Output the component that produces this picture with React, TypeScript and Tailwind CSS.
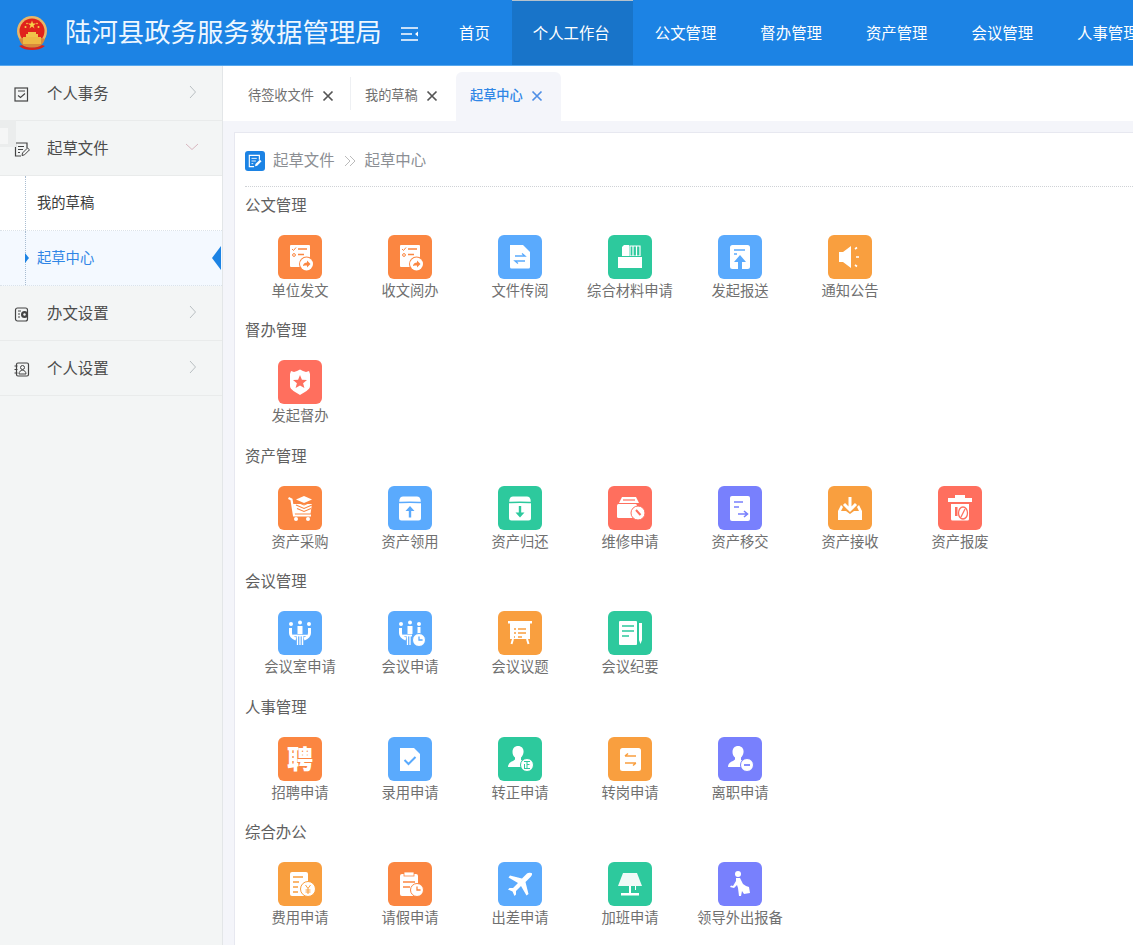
import type { ReactNode } from "react";

const ORANGE = "#fb8641";
const BLUE = "#5aaafd";
const GREEN = "#2dc99d";
const AMBER = "#f99f3f";
const RED = "#ff6f5e";
const PURPLE = "#7880fd";

const tileClass: Record<string, string> = {
  [ORANGE]: "bg-[#fb8641]",
  [BLUE]: "bg-[#5aaafd]",
  [GREEN]: "bg-[#2dc99d]",
  [AMBER]: "bg-[#f99f3f]",
  [RED]: "bg-[#ff6f5e]",
  [PURPLE]: "bg-[#7880fd]",
};

type Item = { label: string; color: string; glyph: (c: string) => ReactNode };

// small clock badge used by a few of the tiles
const clock = (x: number, y: number, r: number, c: string) => (
  <>
    <circle cx={x} cy={y} r={r} fill="#fff" stroke={c} strokeWidth="1" />
    <path d={`M${x} ${y - r * 0.55}V${y}H${x + r * 0.55}`} fill="none" stroke={c} strokeWidth="1.3" />
  </>
);

const checklist = (c: string) => (
  <>
    <rect x="12" y="10" width="20" height="22" rx="1" fill="#fff" />
    <path d="M20 14h9M20 19.500h6" stroke={c} strokeWidth="1.300" />
    <path d="M14 14l1.500 1.500L18 12.500" fill="none" stroke={c} strokeWidth="1" />
    <circle cx="16" cy="20" r="1.400" fill="none" stroke={c} strokeWidth="1" />
    <circle cx="28.500" cy="29" r="7.500" fill={c} />
    <circle cx="28.500" cy="29" r="6.500" fill="#fff" />
    <path d="M25 30.500c.5-2 2-3 4-3v-2l3.500 3.500-3.500 3.500v-2c-1.500 0-3 0-4 .500z" fill={c} />
  </>
);

const box = (dir: "up" | "down", c: string) => (
  <>
    <path d="M15 10.500h14c2 0 3 1 3.500 3l.5 4v14.500a2.500 2.500 0 0 1-2.500 2.500h-17A2.500 2.500 0 0 1 11 32V17.500l.5-4c.5-2 1.500-3 3.500-3z" fill="#fff" />
    <path d="M11 16.500c4-.500 18-.500 22 0" fill="none" stroke={c} strokeWidth="1.500" />
    {dir === "up" ? (
      <path d="M22 20l-4.500 5h3.300v6.500h2.400V25h3.300z" fill={c} />
    ) : (
      <path d="M22 31.500l-4.500-5h3.300V20h2.400v6.500h3.300z" fill={c} />
    )}
  </>
);

const person = (c: string) => (
  <>
    <path d="M20 9c4 0 6 3 5.500 6.500-.3 2.500-1.500 4-2.500 5v2.500l4 2v5H10c0-3 2-5 5-6l2-1.500v-2c-1.500-1-2.500-3-2.500-5.500C14.500 11 17 9 20 9z" fill="#fff" />
    <circle cx="29" cy="28" r="6.500" fill="#fff" stroke={c} strokeWidth="1" />
  </>
);

const meetingBase = (
  <>
    <circle cx="13" cy="13" r="2" fill="#fff" />
    <circle cx="22" cy="11.500" r="2" fill="#fff" />
    <circle cx="31" cy="13" r="2" fill="#fff" />
    <rect x="19.500" y="15" width="5" height="8" fill="#fff" />
    <path d="M12.500 17v5c0 3 3 5 5.500 6" fill="none" stroke="#fff" strokeWidth="3" />
    <path d="M15 24.500h9" stroke="#fff" strokeWidth="1.800" />
    <path d="M19.500 25v9M22 25v9" stroke="#fff" strokeWidth="1.300" />
  </>
);

const sections: { title: string; items: Item[] }[] = [
  {
    title: "公文管理",
    items: [
      { label: "单位发文", color: ORANGE, glyph: checklist },
      { label: "收文阅办", color: ORANGE, glyph: checklist },
      {
        label: "文件传阅",
        color: BLUE,
        glyph: (c) => (
          <>
            <path d="M12 10h13l7 7v15a1.500 1.500 0 0 1-1.500 1.500h-17A1.500 1.500 0 0 1 12 32z" fill="#fff" />
            <path d="M17 21h10l-3-2.500M27 26H17l3 2.500" fill="none" stroke={c} strokeWidth="1.300" />
          </>
        ),
      },
      {
        label: "综合材料申请",
        color: GREEN,
        glyph: (c) => (
          <>
            <path d="M14 21v-9l2-2h5v11z" fill="#fff" />
            <path d="M22 11h10v10H22z" fill="none" stroke="#fff" strokeWidth="1.200" />
            <path d="M25 11v10M28.500 11v10" stroke="#fff" strokeWidth="1.200" />
            <rect x="10" y="22" width="24" height="11" fill="#fff" />
            <path d="M10 21.500h24" stroke={c} strokeWidth="1" />
          </>
        ),
      },
      {
        label: "发起报送",
        color: BLUE,
        glyph: (c) => (
          <>
            <rect x="12" y="10" width="20" height="24" rx="2.500" fill="#fff" />
            <path d="M16 15h11" stroke={c} strokeWidth="1.500" />
            <path d="M16 19h3" stroke={c} strokeWidth="1.500" />
            <path d="M22 20l-6 7h4v7h4v-7h4z" fill={c} />
          </>
        ),
      },
      {
        label: "通知公告",
        color: AMBER,
        glyph: () => (
          <>
            <path d="M11 17h4l8-6v22l-8-6h-4z" fill="#fff" />
            <path d="M27 14l2-1.500M28 22h3M27 30l2 1.500" stroke="#fff" strokeWidth="1.600" />
          </>
        ),
      },
    ],
  },
  {
    title: "督办管理",
    items: [
      {
        label: "发起督办",
        color: RED,
        glyph: (c) => (
          <>
            <path d="M13 11l3 1 3-1 3-1.500 3 1.500 3 1 3-1 1 3v12c0 4-6 6-10 9-4-3-10-5-10-9V14z" fill="#fff" />
            <path d="M22 15l1.900 4.700 5.100.300-3.900 3.200 1.300 4.900-4.400-2.700-4.400 2.700 1.300-4.900-3.900-3.200 5.100-.300z" fill={c} />
          </>
        ),
      },
    ],
  },
  {
    title: "资产管理",
    items: [
      {
        label: "资产采购",
        color: ORANGE,
        glyph: (c) => (
          <>
            <path d="M10.500 12l3 1.500 2.500 16h17" fill="none" stroke="#fff" strokeWidth="2.200" />
            <path d="M15 18h19l-1.500 9.500H16z" fill="#fff" />
            <circle cx="18" cy="33" r="2" fill="#fff" />
            <circle cx="30" cy="33" r="2" fill="#fff" />
            <path d="M26 10l8 3.500-8 3.500-8-3.500z" fill="#fff" />
            <path d="M18 15.500l8 3.500 8-3.500M18 19l8 3.500 8-3.500M19 22.500l7 3 7-3" fill="none" stroke={c} strokeWidth="1.100" />
          </>
        ),
      },
      { label: "资产领用", color: BLUE, glyph: (c) => box("up", c) },
      { label: "资产归还", color: GREEN, glyph: (c) => box("down", c) },
      {
        label: "维修申请",
        color: RED,
        glyph: (c) => (
          <>
            <path d="M14 11h14l3 6H11z" fill="#fff" />
            <path d="M15 14h12" stroke={c} strokeWidth="1.200" />
            <rect x="9" y="18" width="20" height="14" rx="1.500" fill="#fff" />
            <circle cx="30" cy="27" r="7" fill="#fff" stroke={c} strokeWidth="1" />
            <path d="M28 24l4.500 5" stroke={c} strokeWidth="2" />
          </>
        ),
      },
      {
        label: "资产移交",
        color: PURPLE,
        glyph: (c) => (
          <>
            <rect x="12" y="10" width="20" height="25" rx="2" fill="#fff" />
            <path d="M16 16h9M16 21h5M20 28h9M26 25l3.500 3-3.500 3" fill="none" stroke={c} strokeWidth="1.600" />
          </>
        ),
      },
      {
        label: "资产接收",
        color: AMBER,
        glyph: () => (
          <>
            <path d="M22 11v13M16 18l6 6 6-6" fill="none" stroke="#fff" strokeWidth="3" />
            <path d="M13 19l-3 6v9h24v-9l-3-6-2 2 2 4h-5l-4 3-4-3h-5l2-4z" fill="#fff" />
          </>
        ),
      },
      {
        label: "资产报废",
        color: RED,
        glyph: (c) => (
          <>
            <rect x="17" y="9" width="10" height="3" fill="#fff" />
            <rect x="10" y="12" width="24" height="4" fill="#fff" />
            <path d="M13 18h18v15a1.500 1.500 0 0 1-1.500 1.500h-15A1.500 1.500 0 0 1 13 33z" fill="#fff" />
            <ellipse cx="25" cy="27" rx="4.500" ry="6" fill="none" stroke={c} strokeWidth="1.300" />
            <path d="M23 31l4-8" stroke={c} strokeWidth="1.300" />
            <rect x="17" y="21" width="2.500" height="9" fill={c} />
          </>
        ),
      },
    ],
  },
  {
    title: "会议管理",
    items: [
      {
        label: "会议室申请",
        color: BLUE,
        glyph: () => (
          <>
            {meetingBase}
            <path d="M31.500 17v5c0 3-3 5-5.500 6" fill="none" stroke="#fff" strokeWidth="3" />
            <path d="M24 24.500h5M24.500 25v9" stroke="#fff" strokeWidth="1.500" />
          </>
        ),
      },
      {
        label: "会议申请",
        color: BLUE,
        glyph: (c) => (
          <>
            {meetingBase}
            <rect x="29.500" y="16" width="3" height="7" fill="#fff" />
            {clock(31, 29, 6.500, c)}
          </>
        ),
      },
      {
        label: "会议议题",
        color: AMBER,
        glyph: (c) => (
          <>
            <rect x="10" y="10" width="24" height="2.500" fill="#fff" />
            <path d="M12 12h20v16H12z" fill="#fff" />
            <path d="M15 28l-1.500 5M29 28l1.500 5" stroke="#fff" strokeWidth="2" />
            <path d="M16 18h2M20 18h8M16 22h2M20 22h8M16 26h1M20 26h4" stroke={c} strokeWidth="1.300" />
          </>
        ),
      },
      {
        label: "会议纪要",
        color: GREEN,
        glyph: (c) => (
          <>
            <rect x="11" y="10" width="18" height="24" rx="1" fill="#fff" />
            <path d="M14 15h12M14 20h12M14 25h7" stroke={c} strokeWidth="1.500" />
            <path d="M31 12h3v17l-1.500 4-1.500-4z" fill="#fff" />
          </>
        ),
      },
    ],
  },
  {
    title: "人事管理",
    items: [
      {
        label: "招聘申请",
        color: ORANGE,
        glyph: () => (
          <text x="22" y="32" textAnchor="middle" fontSize="26" fontWeight="900" fill="#fff">
            聘
          </text>
        ),
      },
      {
        label: "录用申请",
        color: BLUE,
        glyph: (c) => (
          <>
            <path d="M12 11h14l6 6v17H12z" fill="#fff" />
            <path d="M16.500 23l4 4 7-7" fill="none" stroke={c} strokeWidth="2" />
          </>
        ),
      },
      {
        label: "转正申请",
        color: GREEN,
        glyph: (c) => (
          <>
            {person(c)}
            <path d="M26 24.500h6M29 24.500v7M26.500 27v4.500M26 31.500h6M29 27.500h2.500" stroke={c} strokeWidth="1" fill="none" />
          </>
        ),
      },
      {
        label: "转岗申请",
        color: AMBER,
        glyph: (c) => (
          <>
            <rect x="12" y="11" width="21" height="23" rx="2.500" fill="#fff" />
            <path d="M17 19h11M20 16.500L17 19M17 26h11M25 28.500l3-2.500" fill="none" stroke={c} strokeWidth="1.600" />
          </>
        ),
      },
      {
        label: "离职申请",
        color: PURPLE,
        glyph: (c) => (
          <>
            {person(c)}
            <path d="M26 28h6" stroke={c} strokeWidth="1.800" />
          </>
        ),
      },
    ],
  },
  {
    title: "综合办公",
    items: [
      {
        label: "费用申请",
        color: AMBER,
        glyph: (c) => (
          <>
            <rect x="12" y="10" width="18" height="24" rx="2" fill="#fff" />
            <path d="M15 15h10M15 20h6M15 25h5M15 30h5" stroke={c} strokeWidth="1.500" />
            <circle cx="30" cy="27" r="7.500" fill="#fff" stroke={c} strokeWidth="1" />
            <path d="M27.500 23l2.500 3.500 2.500-3.500M30 26.500V32M27.500 28h5M27.500 30h5" fill="none" stroke={c} strokeWidth="1" />
          </>
        ),
      },
      {
        label: "请假申请",
        color: ORANGE,
        glyph: (c) => (
          <>
            <rect x="12" y="12" width="18" height="22" rx="2" fill="#fff" />
            <rect x="16" y="10" width="10" height="4" fill="#fff" stroke={c} strokeWidth=".8" />
            <path d="M15 20h12M15 25h7" stroke={c} strokeWidth="1.500" />
            {clock(29, 28, 6.500, c)}
          </>
        ),
      },
      {
        label: "出差申请",
        color: BLUE,
        glyph: () => (
          <path
            d="M33 11c1.500 0 1.500 2-.5 4l-5 5 3 12-2 1.500-5.500-9.500-5 5v3.500L16.500 34l-2-4.500L10 27.500l1.500-1.500H15l5-5-9.500-5.500L12 13.500l12 3 5-5c1-1 3-1 4-.500z"
            fill="#fff"
          />
        ),
      },
      {
        label: "加班申请",
        color: GREEN,
        glyph: () => (
          <>
            <path d="M15 11h14l5 13H10z" fill="#f0faf7" />
            <path d="M21 24h2v7h-2z" fill="#fff" />
            <path d="M27 24h1v4h-1z" fill="#fff" />
            <rect x="13" y="31" width="18" height="2.500" fill="#fff" />
          </>
        ),
      },
      {
        label: "领导外出报备",
        color: PURPLE,
        glyph: () => (
          <>
            <circle cx="20" cy="12" r="3" fill="#fff" />
            <path d="M18 16h4l3 6 3 2 3 1 1 6-6 1-2-3-1 5h-2l-1-8-1-3-3 3-4-1 1-1.500 2 .500 3-5z" fill="#fff" />
          </>
        ),
      },
    ],
  },
];

function Tile({ item }: { item: Item }) {
  return (
    <div className="flex h-[69px] w-[110px] shrink-0 flex-col items-center">
      <div className={`h-11 w-11 rounded-md ${tileClass[item.color]}`}>
        <svg width="44" height="44" viewBox="0 0 44 44">
          {item.glyph(item.color)}
        </svg>
      </div>
      <span className="whitespace-nowrap text-[14.3px] leading-6 text-[#707070]">{item.label}</span>
    </div>
  );
}

function Chevron({ open }: { open?: boolean }) {
  return open ? (
    <svg width="14" height="8" viewBox="0 0 14 8" className="absolute right-[23px] top-[22px]">
      <path d="M1 1l6 5.500L13 1" fill="none" stroke="#d8b6bf" strokeWidth="1" />
    </svg>
  ) : (
    <svg width="8" height="14" viewBox="0 0 8 14" className="absolute right-[25px] top-[19px]">
      <path d="M1 1l5.500 6L1 13" fill="none" stroke="#b9bfc2" strokeWidth="1" />
    </svg>
  );
}

const sideIcons: Record<string, ReactNode> = {
  task: (
    <>
      <rect x="1" y="1" width="12.500" height="13" fill="none" stroke="#444" strokeWidth="1.200" />
      <path d="M4 4h7" stroke="#444" strokeWidth="1" />
      <path d="M4 8.500l2.500 2L11 6.500" fill="none" stroke="#444" strokeWidth="1.100" />
    </>
  ),
  draft: (
    <>
      <path d="M13 6V1H1.500v13H7" fill="none" stroke="#444" strokeWidth="1.200" />
      <path d="M4 4.500h6M4 7.500h5M4 10.500h2" stroke="#444" strokeWidth="1" />
      <path d="M8 13.500l.5-2.500 5-5 2 1.800-5 5z" fill="none" stroke="#444" strokeWidth="1" />
    </>
  ),
  setting: (
    <>
      <rect x="1.500" y="1" width="12" height="13" rx="2" fill="none" stroke="#444" strokeWidth="1.200" />
      <path d="M4 4h3M4 7h2M4 10h2" stroke="#444" strokeWidth="1" />
      <circle cx="10.500" cy="7.500" r="3.500" fill="#444" />
      <circle cx="10.500" cy="7.500" r="1.200" fill="#f3f5f5" />
    </>
  ),
  user: (
    <>
      <rect x="2.500" y="1" width="12" height="13" rx="1.500" fill="none" stroke="#444" strokeWidth="1.200" />
      <path d="M.5 4h3M.5 7.500h3M.5 11h3" stroke="#444" strokeWidth="1" />
      <circle cx="8.500" cy="5.500" r="2" fill="none" stroke="#444" strokeWidth="1" />
      <path d="M5 12c0-5 7-5 7 0z" fill="none" stroke="#444" strokeWidth="1" />
    </>
  ),
};

function SideRow({ icon, label, open }: { icon: string; label: string; open?: boolean }) {
  return (
    <div className="relative flex h-[55px] items-center border-b border-[#e9ebeb] pl-[14px] pt-[2px]">
      <svg width="16" height="15" viewBox="0 0 16 15" className="shrink-0">
        {sideIcons[icon]}
      </svg>
      <span className="ml-[17px] text-[15.4px] text-[#4c4c4c]">{label}</span>
      <Chevron open={open} />
    </div>
  );
}

function TabClose({ active }: { active?: boolean }) {
  return (
    <svg width="12" height="12" viewBox="0 0 12 12" className="ml-2 shrink-0">
      <path d="M1.500 1.500l9 9M10.500 1.500l-9 9" stroke={active ? "#4f8fe6" : "#555"} strokeWidth="1.700" />
    </svg>
  );
}

function Emblem() {
  return (
    <svg width="32" height="36" viewBox="0 0 32 36" className="shrink-0">
      <circle cx="16" cy="15" r="15" fill="#eab667" />
      <circle cx="16" cy="15" r="12.500" fill="#e0231c" />
      <path d="M16 4.500l1 3h3l-2.500 2 1 3-2.500-2-2.500 2 1-3-2.500-2h3z" fill="#f6d24a" />
      <circle cx="9.500" cy="11" r="1" fill="#f6d24a" />
      <circle cx="22.500" cy="11" r="1" fill="#f6d24a" />
      <circle cx="11" cy="7.500" r=".8" fill="#f6d24a" />
      <circle cx="21" cy="7.500" r=".8" fill="#f6d24a" />
      <path d="M3 23c2 6 6 9 13 9s11-3 13-9l-3-1H6z" fill="#d98a3a" />
      <path d="M10 21h12v-3h-2v-2h-8v2h-2z" fill="#f0c24a" />
      <rect x="7" y="21" width="18" height="7" fill="#eeb944" />
      <path d="M3 30c4 3 8 4 13 4s9-1 13-4l-3-1c-3 2-6 2.500-10 2.500S9 31 6 29z" fill="#d9231b" />
    </svg>
  );
}

export default function App() {
  const navs = ["公文管理", "督办管理", "资产管理", "会议管理", "人事管理"];

  return (
    <div className="flex h-[945px] w-[1133px] flex-col overflow-hidden bg-white font-['Liberation_Sans','Noto_Sans_CJK_SC',sans-serif]">
      {/* Top bar */}
      <header className="flex h-[66px] shrink-0 items-stretch border-b border-[#58a8ee] bg-[#1c83e4] text-white">
        <div className="flex w-[438px] shrink-0 items-center pl-4 pt-[2px]">
          <Emblem />
          <span className="ml-[17px] whitespace-nowrap text-[26.4px] leading-none text-[#eef7ff]">陆河县政务服务数据管理局</span>
          <svg width="18" height="14" viewBox="0 0 18 14" className="ml-[19px] shrink-0">
            <path d="M0 1h17M0 7h11M0 13h17" stroke="#fff" strokeWidth="1.300" />
            <path d="M17 4.500L14 7l3 2.500z" fill="#fff" />
          </svg>
        </div>
        <div className="flex shrink-0 items-center whitespace-nowrap pl-[21px] pr-[22px] pt-[2px] text-[15.4px]">首页</div>
        <div className="flex shrink-0 items-center whitespace-nowrap border-t border-[#b5c2cc] bg-[#1874c9] pl-[21px] pr-[23px] pt-px text-[15.4px]">个人工作台</div>
        {navs.map((n) => (
          <div key={n} className="flex shrink-0 items-center whitespace-nowrap px-[22px] pt-[2px] text-[15.4px]">
            {n}
          </div>
        ))}
      </header>

      <div className="flex min-h-0 flex-1">
        {/* Sidebar */}
        <aside className="relative w-[223px] shrink-0 border-r border-[#e3e6e8] bg-[#f3f5f5]">
          <SideRow icon="task" label="个人事务" />
          <SideRow icon="draft" label="起草文件" open />
          <div className="relative h-[55px] border-b border-dotted border-[#dbe3ea] bg-white pl-[37px] text-[14.3px] leading-[54px] text-[#3c3c3c]">
            <div className="absolute bottom-0 left-[25px] top-0 border-l border-dotted border-[#a9bdd1]" />
            我的草稿
          </div>
          <div className="relative h-[55px] border-b border-dotted border-[#dbe3ea] bg-[#f4f9ff] pl-[37px] text-[14.3px] leading-[54px] text-[#2f86e6]">
            <div className="absolute bottom-0 left-[25px] top-0 border-l border-dotted border-[#a9bdd1]" />
            <div className="absolute left-[25px] top-[22px] h-0 w-0 border-y-[5px] border-l-[4px] border-y-transparent border-l-[#1c83e4]" />
            <div className="absolute right-px top-[15px] h-0 w-0 border-y-[12px] border-r-[9px] border-y-transparent border-r-[#1c83e4]" />
            起草中心
          </div>
          <SideRow icon="setting" label="办文设置" />
          <SideRow icon="user" label="个人设置" />
          <div className="absolute left-0 top-[54px] h-[27px] w-4 bg-[#ebeded]">
            <div className="mt-2 h-4 w-2 bg-[#f5f6f6]" />
          </div>
        </aside>

        {/* Main */}
        <main className="flex min-w-0 flex-1 flex-col bg-[#f4f5fa]">
          <div className="flex h-[55px] shrink-0 items-start bg-white pl-[11px] text-[13.2px]">
            <div className="mt-[11px] flex h-[33px] w-[117px] items-center border-r border-[#eef0f3] pl-[14px] pt-[5px] text-[#707070]">
              待签收文件
              <TabClose />
            </div>
            <div className="mt-[11px] flex h-[33px] w-[105px] items-center pl-[14px] pt-[5px] text-[#707070]">
              我的草稿
              <TabClose />
            </div>
            <div className="mt-[6px] flex h-[49px] w-[105px] items-center rounded-t-md bg-[#f4f5fa] pb-px pl-[14px] font-medium text-[#2f86e6]">
              起草中心
              <TabClose active />
            </div>
          </div>

          <div className="min-h-0 flex-1 pl-[11px] pt-[11px]">
            <div className="h-[900px] border border-r-0 border-[#e7e8f0] bg-white pl-[10px]">
              <div className="flex h-[54px] items-center border-b border-dotted border-[#cfd2d6] pt-[2px] text-[15.4px] text-[#8c8f94]">
                <div className="flex h-5 w-5 items-center justify-center rounded-[3px] bg-[#1c83e4]">
                  <svg width="14" height="14" viewBox="0 0 16 15">
                    <path d="M13 6V1H1.500v13H7" fill="none" stroke="#fff" strokeWidth="1.300" />
                    <path d="M4 4.500h6M4 7.500h5M4 10.500h2" stroke="#fff" strokeWidth="1" />
                    <path d="M8 13.500l.5-2.500 5-5 2 1.800-5 5z" fill="#fff" />
                  </svg>
                </div>
                <span className="ml-2">起草文件</span>
                <svg width="12" height="12" viewBox="0 0 12 12" className="mx-[9px]">
                  <path d="M1 1l5 5-5 5M6 1l5 5-5 5" fill="none" stroke="#bbb" strokeWidth="1" />
                </svg>
                <span>起草中心</span>
              </div>

              {sections.map((s) => (
                <section key={s.title} className="h-[125.4px]">
                  <h2 className="h-9 pt-px text-[15.4px] font-normal leading-9 text-[#606060]">{s.title}</h2>
                  <div className="mt-3 flex">
                    {s.items.map((item) => (
                      <Tile key={item.label} item={item} />
                    ))}
                  </div>
                </section>
              ))}
            </div>
          </div>
        </main>
      </div>
    </div>
  );
}
